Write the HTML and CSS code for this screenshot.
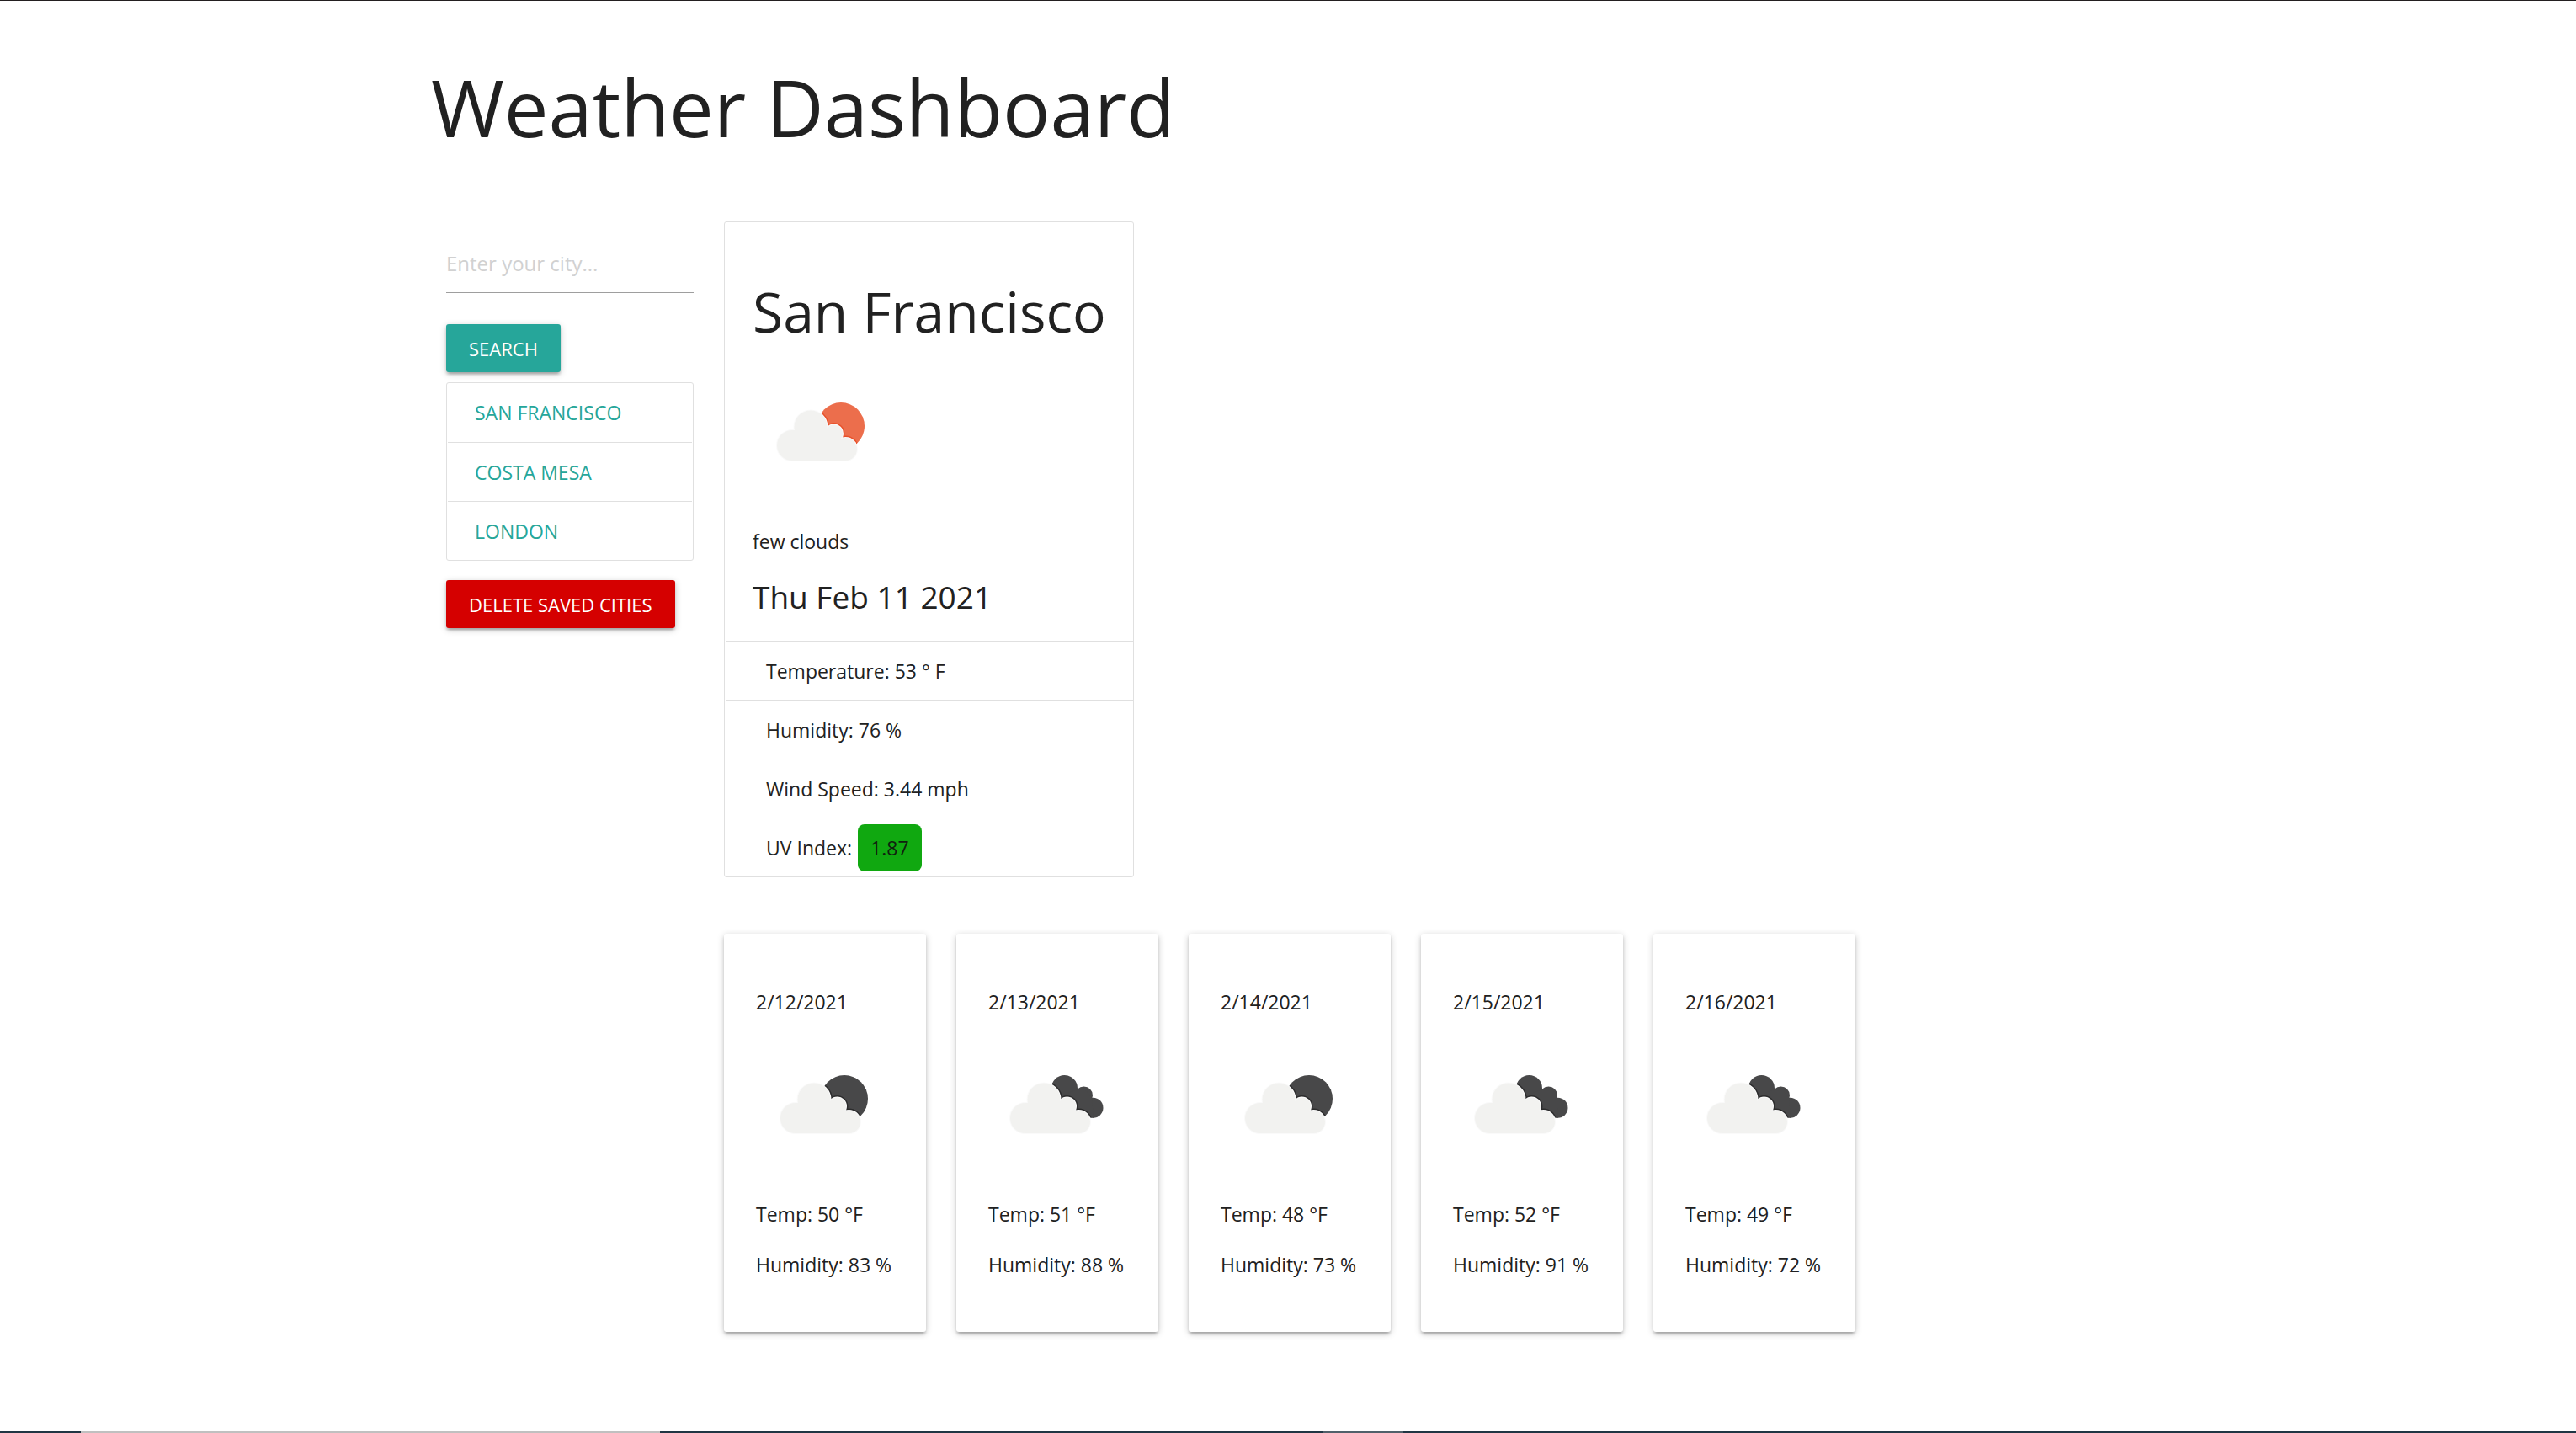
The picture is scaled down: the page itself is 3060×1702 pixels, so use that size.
FILE: index.html
```html
<!DOCTYPE html>
<html lang="en">
<head>
<meta charset="utf-8">
<title>Weather Dashboard</title>
<link rel="stylesheet" href="styles.css">
</head>
<body>
<svg class="sprite" aria-hidden="true">
  <defs>
    <g id="cloud">
      <circle cx="46" cy="96" r="18"/>
      <circle cx="68" cy="74" r="19.500"/>
      <circle cx="95.500" cy="82" r="10.500"/>
      <circle cx="109.500" cy="100.500" r="13.500"/>
      <path d="M46 114V78H64V74H87V82H104V88H109.500V114Z"/>
    </g>
    <g id="back-cloud">
      <circle cx="89.500" cy="60.500" r="15.500"/>
      <circle cx="112.500" cy="69" r="10.500"/>
      <circle cx="123.500" cy="83.700" r="12"/>
      <path d="M80 72L104 62L112 60L122 72L124 95.700L100 92Z"/>
    </g>
    <clipPath id="disc-clip"><circle cx="104" cy="73" r="28"/></clipPath>
    <clipPath id="back-clip">
      <circle cx="89.500" cy="60.500" r="15.500"/>
      <circle cx="112.500" cy="69" r="10.500"/>
      <circle cx="123.500" cy="83.700" r="12"/>
      <path d="M80 72L104 62L112 60L122 72L124 95.700L100 92Z"/>
    </clipPath>
    <symbol id="few-clouds" viewBox="-1 0 160 160">
      <circle class="disc" cx="104" cy="73" r="28"/>
      <g clip-path="url(#disc-clip)"><use href="#cloud" class="edge"/></g>
      <use href="#cloud" class="halo"/>
      <use href="#cloud" class="front"/>
    </symbol>
    <symbol id="broken-clouds" viewBox="-1 0 160 160">
      <use href="#back-cloud" class="disc"/>
      <g clip-path="url(#back-clip)"><use href="#cloud" x="-3" class="edge"/></g>
      <use href="#cloud" x="-3" class="halo"/>
      <use href="#cloud" x="-3" class="front"/>
    </symbol>
  </defs>
</svg>

<div class="container">
  <header><h1>Weather Dashboard</h1></header>
  <div class="layout">
    <aside>
      <form class="search" onsubmit="return false">
        <input type="text" placeholder="Enter your city..." aria-label="City">
        <button class="btn" type="submit">SEARCH</button>
      </form>
      <ul class="cities">
        <li><a href="#">SAN FRANCISCO</a></li>
        <li><a href="#">COSTA MESA</a></li>
        <li><a href="#">LONDON</a></li>
      </ul>
      <button class="btn btn-danger" type="button">DELETE SAVED CITIES</button>
    </aside>
    <main>
      <section class="current">
        <div class="current-head">
          <h2>San Francisco</h2>
          <svg class="icon day" role="img" aria-label="few clouds"><use href="#few-clouds"/></svg>
          <p>few clouds</p>
          <h3>Thu Feb 11 2021</h3>
        </div>
        <ul class="readings">
          <li>Temperature: 53 ° F</li>
          <li>Humidity: 76 %</li>
          <li>Wind Speed: 3.44 mph</li>
          <li>UV Index: <span class="uv">1.87</span></li>
        </ul>
      </section>
      <section class="forecast">
        <article class="card">
          <p>2/12/2021</p>
          <svg class="icon" role="img" aria-label="few clouds"><use href="#few-clouds"/></svg>
          <p>Temp: 50 °F</p>
          <p>Humidity: 83 %</p>
        </article>
        <article class="card">
          <p>2/13/2021</p>
          <svg class="icon" role="img" aria-label="broken clouds"><use href="#broken-clouds"/></svg>
          <p>Temp: 51 °F</p>
          <p>Humidity: 88 %</p>
        </article>
        <article class="card">
          <p>2/14/2021</p>
          <svg class="icon" role="img" aria-label="few clouds"><use href="#few-clouds"/></svg>
          <p>Temp: 48 °F</p>
          <p>Humidity: 73 %</p>
        </article>
        <article class="card">
          <p>2/15/2021</p>
          <svg class="icon" role="img" aria-label="broken clouds"><use href="#broken-clouds"/></svg>
          <p>Temp: 52 °F</p>
          <p>Humidity: 91 %</p>
        </article>
        <article class="card">
          <p>2/16/2021</p>
          <svg class="icon" role="img" aria-label="broken clouds"><use href="#broken-clouds"/></svg>
          <p>Temp: 49 °F</p>
          <p>Humidity: 72 %</p>
        </article>
      </section>
    </main>
  </div>
</div>
<div class="bottom-strip"><span class="strip-task"></span><span class="strip-active"></span></div>
</body>
</html>
```
FILE: styles.css
```css
* {
  box-sizing: border-box;
}

body {
  display: flex;
  flex-direction: column;
  min-height: 100vh;
  margin: 0;
  border-top: 1px solid #231f20;
  background: #fff;
  color: #212121;
  font-family: "Open Sans", "Noto Sans", sans-serif;
  font-size: 23px;
  line-height: 36px;
}

h1, h2, h3, p, ul {
  margin: 0;
  padding: 0;
  font-weight: 400;
}

ul {
  list-style: none;
}

.sprite {
  position: absolute;
  width: 0;
  height: 0;
}

.container {
  flex: 1;
  width: 67%;
  max-width: 2048px;
  margin: 0 auto;
  padding: 74px 0 48px 6px;
}

h1 {
  margin-bottom: 84px;
  font-size: 94px;
  line-height: 104px;
}

.layout {
  display: grid;
  grid-template-columns: 294px 1fr;
  gap: 36px;
  padding-left: 18px;
}

/* Sidebar */

.search input {
  display: block;
  width: 100%;
  height: 71px;
  margin: 14px 0 37px;
  padding: 0;
  border: 0;
  border-bottom: 1px solid #9e9e9e;
  outline: 0;
  background: transparent;
  color: inherit;
  font: inherit;
  font-size: 24px;
}

.search input::placeholder {
  color: #d1d1d1;
  opacity: 1;
}

.btn {
  display: block;
  height: 57px;
  padding: 0 27px;
  border: 0;
  border-radius: 3px;
  background: #26a69a;
  box-shadow: 0 3px 3px rgba(0, 0, 0, .14), 0 5px 2px -3px rgba(0, 0, 0, .12), 0 2px 8px rgba(0, 0, 0, .2);
  color: #fff;
  font: inherit;
  font-size: 22px;
  cursor: pointer;
}

.btn-danger {
  background: #d50000;
}

.cities {
  margin: 12px 0 23px;
  border: 1px solid #e0e0e0;
  border-radius: 3px;
}

.cities li {
  height: 70px;
  margin: 0 1px;
  padding: 0 32px;
  line-height: 70px;
}

.cities li + li {
  border-top: 1px solid #e0e0e0;
}

.cities a {
  color: #26a69a;
  text-decoration: none;
}

/* Current conditions */

.current {
  width: fit-content;
  border: 1px solid #e0e0e0;
  border-radius: 3px;
}

.current-head {
  padding: 66px 32px 30px 33px;
}

h2 {
  margin-bottom: 25px;
  font-size: 66px;
  line-height: 78px;
}

h3 {
  margin-top: 26px;
  font-size: 37px;
  line-height: 44px;
}

.icon {
  display: block;
  width: 160px;
  height: 160px;
  margin-bottom: 32px;
  color: #484849;
  --edge: #2c2c2d;
}

.icon.day {
  color: #ec6e4c;
  --edge: #e8512a;
}

.disc {
  fill: currentColor;
}

.edge {
  fill: none;
  stroke: var(--edge);
  stroke-width: 5px;
}

.halo {
  fill: #fff;
  stroke: #fafafa;
  stroke-width: 2px;
}

.front {
  fill: #f2f2f0;
}

.readings li {
  display: flex;
  align-items: center;
  gap: 7px;
  height: 70px;
  margin-left: 1px;
  padding-left: 48px;
  border-top: 1px solid #e0e0e0;
}

.uv {
  padding: 10px 15px;
  border-radius: 8px;
  background: #10a810;
  color: #10210f;
}

/* Forecast */

.forecast {
  display: flex;
  flex-wrap: wrap;
  gap: 36px;
  margin-top: 67px;
}

.card {
  width: 240px;
  padding: 63px 0 62px 38px;
  border-radius: 3px;
  background: #fff;
  box-shadow: 0 3px 3px rgba(0, 0, 0, .14), 0 5px 2px -3px rgba(0, 0, 0, .12), 0 2px 8px rgba(0, 0, 0, .2);
}

.card p + p,
.card p + .icon {
  margin-top: 24px;
}

/* Strip along the window's lower edge */

.bottom-strip {
  display: flex;
  height: 2px;
  background: #203644;
}

.strip-task {
  width: 688px;
  margin-left: 96px;
  background: #c0c0c0;
}

.strip-active {
  width: 96px;
  margin-left: 787px;
  background: #50606a;
}
```
